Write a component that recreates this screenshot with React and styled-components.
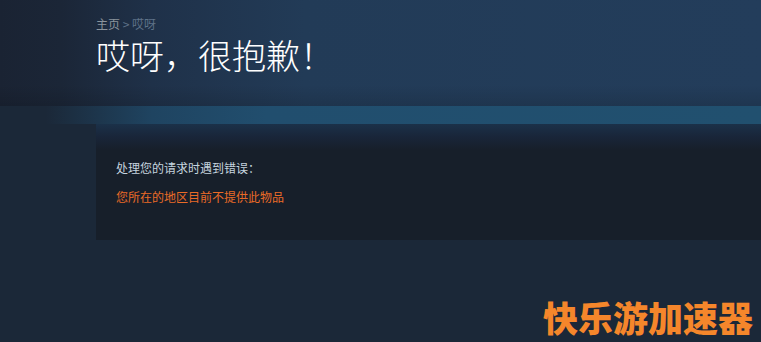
import styled, { createGlobalStyle } from 'styled-components';

const GlobalStyle = createGlobalStyle`
  html, body {
    margin: 0;
    padding: 0;
    background: #1b2838;
  }
`;

const Page = styled.div`
  position: relative;
  min-height: 100vh;
  overflow: hidden;
  background: #1b2838;
  font-family: 'Noto Sans CJK SC', 'Noto Sans', sans-serif;
`;

const Header = styled.div`
  height: 106px;
  box-sizing: border-box;
  padding: 16px 0 0 96px;
  background:
    linear-gradient(180deg, rgba(0, 0, 0, 0) 80%, rgba(0, 0, 0, 0.12) 100%),
    linear-gradient(90deg, #1a2333 0%, #1b2637 8%, #1f3149 20%, #223b57 40%, #233d5b 100%);
`;

const Breadcrumbs = styled.div`
  font-size: 12px;
  line-height: 16px;
  color: #5e7288;
`;

const Crumb = styled.span`
  color: ${(p) => (p.$home ? '#8b949c' : '#5e7288')};
`;

const Title = styled.h1`
  margin: 3px 0 0;
  font-size: 34px;
  line-height: 40px;
  font-weight: 300;
  color: #ffffff;
  letter-spacing: 0;
`;

const Band = styled.div`
  height: 18px;
  background: linear-gradient(90deg, #1b2838 6%, #1f4461 20%, #214e6e 35%, #21506f 100%);
`;

const Panel = styled.div`
  margin-left: 96px;
  height: 116px;
  box-sizing: border-box;
  padding: 36px 20px 0;
  background: linear-gradient(180deg, #1b3149 0px, #19263a 12px, #171f2a 26px, #171f2a 100%);
`;

const Message = styled.div`
  font-size: 12px;
  line-height: 16px;
  color: ${(p) => (p.$error ? '#ea6b27' : '#c6d4df')};
  margin-top: ${(p) => (p.$error ? '13px' : '0')};
`;

const Watermark = styled.div`
  position: absolute;
  right: 8px;
  top: 296px;
  font-size: 35px;
  line-height: 42px;
  font-weight: 900;
  color: #f5862b;
`;

export default function App() {
  return (
    <Page>
      <GlobalStyle />
      <Header>
        <Breadcrumbs>
          <Crumb $home>主页</Crumb> &gt; <Crumb>哎呀</Crumb>
        </Breadcrumbs>
        <Title>哎呀，很抱歉！</Title>
      </Header>
      <Band />
      <Panel>
        <Message>处理您的请求时遇到错误：</Message>
        <Message $error>您所在的地区目前不提供此物品</Message>
      </Panel>
      <Watermark>快乐游加速器</Watermark>
    </Page>
  );
}
